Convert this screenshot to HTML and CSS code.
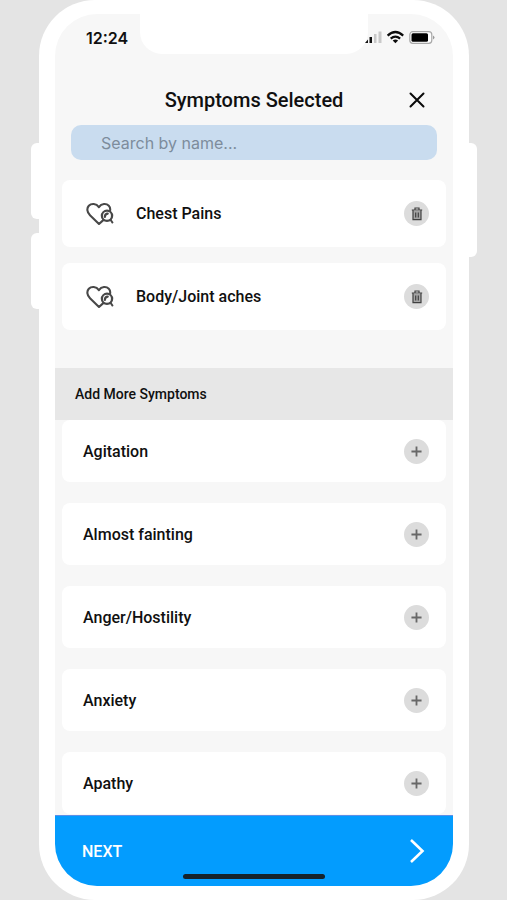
FILE: index.html
```html
<!DOCTYPE html>
<html lang="en">
<head>
<meta charset="utf-8">
<meta name="viewport" content="width=device-width, initial-scale=1">
<title>Symptoms Selected</title>
<link rel="stylesheet" href="styles.css">
</head>
<body>
<svg class="sprite" aria-hidden="true">
  <symbol id="heart" viewBox="0 0 28 24">
    <g fill="none" stroke="#484848" stroke-width="2.100" stroke-linecap="round" stroke-linejoin="round">
      <path d="M13 22 4 13.200C1 10.300 .500 6.300 2.800 3.800C5.300 1.200 10.200 1.200 12.900 5.200C15.600 1.200 20.300 1.200 22.800 3.800C24.100 5.200 24.500 7 24 9M13 22 17 18.400"/>
      <circle cx="21" cy="13.800" r="5.100" stroke-width="2.300"/>
      <path d="M24.700 18 26.400 20.500M18.900 15C18.800 12.800 19.900 11.700 21.800 11.600" />
    </g>
  </symbol>
  <symbol id="trash" viewBox="0 0 12 14">
    <path d="M2 4H10V12.500H2Z" fill="#a5a5a5"/>
    <path d="M.800 3H11.200M4 2.500V1H8V2.500M2 3.500V12.600H10V3.500M4.700 5.500V10.500M7.300 5.500V10.500" fill="none" stroke="#404040" stroke-width="1.200"/>
  </symbol>
  <symbol id="plus" viewBox="0 0 12 12">
    <path d="M6 .500V11.500M.500 6H11.500" fill="none" stroke="#686868" stroke-width="2"/>
  </symbol>
</svg>
<div class="stage">
  <div class="phone">
    <span class="key key-up"></span>
    <span class="key key-down"></span>
    <span class="key key-power"></span>
    <div class="screen">
      <div class="notch"></div>
      <div class="status">
        <span class="time">12:24</span>
        <svg class="signals" viewBox="0 0 72 16" aria-hidden="true">
          <path d="M2 13 5 9.500V13Z" fill="#111"/>
          <path d="M6.500 7H9V13H6.500Z" fill="#111"/>
          <path d="M11 4H13.500V13H11ZM15.500 1.500H18.500V13H15.500Z" fill="#c9c9c9"/>
          <g fill="none" stroke="#0c0c0c" stroke-width="2.200">
            <path d="M24.600 5.600Q32.400-1.600 40.200 5.600"/>
            <path d="M27.700 8.600Q32.400 4.600 37.100 8.600"/>
          </g>
          <path d="M29.700 10.500Q32.400 8.600 35.100 10.500L32.400 13.300Z" fill="#0c0c0c"/>
          <rect x="46.800" y="1.700" width="22" height="11.600" rx="3" fill="#fff" stroke="#a8a8a8" stroke-width="1.200"/>
          <rect x="48.500" y="3.300" width="16.500" height="8.400" rx="1.500" fill="#000"/>
          <path d="M70 5.500Q73 7.500 70 9.500Z" fill="#999"/>
        </svg>
      </div>
      <header class="header">
        <h1>Symptoms Selected</h1>
        <button class="close" type="button" aria-label="Close">
          <svg viewBox="0 0 16 16" aria-hidden="true"><path d="M1.500 1.500 14.500 14.500M14.500 1.500 1.500 14.500" fill="none" stroke="#0a0a0a" stroke-width="2" stroke-linecap="round"/></svg>
        </button>
      </header>
      <input class="search" type="search" placeholder="Search by name..." aria-label="Search by name">
      <ul class="selected">
        <li class="card"><svg class="heart" aria-hidden="true"><use href="#heart"/></svg><span class="name">Chest Pains</span><button class="round" type="button" aria-label="Remove Chest Pains"><svg class="trash"><use href="#trash"/></svg></button></li>
        <li class="card"><svg class="heart" aria-hidden="true"><use href="#heart"/></svg><span class="name">Body/Joint aches</span><button class="round" type="button" aria-label="Remove Body/Joint aches"><svg class="trash"><use href="#trash"/></svg></button></li>
      </ul>
      <h2 class="section">Add More Symptoms</h2>
      <ul class="more">
        <li class="card"><span class="name">Agitation</span><button class="round" type="button" aria-label="Add Agitation"><svg class="plus"><use href="#plus"/></svg></button></li>
        <li class="card"><span class="name">Almost fainting</span><button class="round" type="button" aria-label="Add Almost fainting"><svg class="plus"><use href="#plus"/></svg></button></li>
        <li class="card"><span class="name">Anger/Hostility</span><button class="round" type="button" aria-label="Add Anger/Hostility"><svg class="plus"><use href="#plus"/></svg></button></li>
        <li class="card"><span class="name">Anxiety</span><button class="round" type="button" aria-label="Add Anxiety"><svg class="plus"><use href="#plus"/></svg></button></li>
        <li class="card"><span class="name">Apathy</span><button class="round" type="button" aria-label="Add Apathy"><svg class="plus"><use href="#plus"/></svg></button></li>
      </ul>
      <button class="next" type="button">
        <span>NEXT</span>
        <svg viewBox="0 0 16 26" aria-hidden="true"><path d="M2 2 13.500 13 2 24" fill="none" stroke="#fff" stroke-width="2.600"/></svg>
      </button>
      <span class="home"></span>
    </div>
  </div>
</div>
</body>
</html>
```
FILE: styles.css
```css
* { box-sizing: border-box; }

body {
  margin: 0;
  background: #e4e4e4;
  color: #101010;
  font-family: Roboto, "Liberation Sans", sans-serif;
}

h1, h2, ul { margin: 0; padding: 0; }
ul { list-style: none; }

button {
  border: 0;
  padding: 0;
  font: inherit;
  color: inherit;
  background: none;
  cursor: pointer;
}

.sprite { display: none; }

.stage { padding: 0 38px 0 39px; }

.phone {
  position: relative;
  display: flex;
  min-height: 100vh;
  padding: 14px 16px;
  border-radius: 56px;
  background: #fff;
}

.key {
  position: absolute;
  width: 8px;
  height: 76px;
  background: #fff;
}
.key-up { left: -8px; top: 143px; border-radius: 6px 0 0 6px; }
.key-down { left: -8px; top: 233px; border-radius: 6px 0 0 6px; }
.key-power { right: -8px; top: 143px; height: 114px; border-radius: 0 6px 6px 0; }

.screen {
  position: relative;
  display: flex;
  flex: 1;
  flex-direction: column;
  min-width: 0;
  border-radius: 42px;
  overflow: hidden;
  background: #f7f7f7;
}

.notch {
  position: absolute;
  top: 0;
  left: 85px;
  right: 85px;
  height: 40px;
  border-radius: 0 0 22px 22px;
  background: #fff;
}

.status {
  position: relative;
  display: flex;
  align-items: center;
  justify-content: space-between;
  height: 48px;
  padding: 0 18px 0 31px;
}
.time {
  font-family: Inter, sans-serif;
  font-size: 16px;
  font-weight: 600;
}
.signals { width: 72px; height: 16px; }

.header {
  display: flex;
  align-items: center;
  height: 63px;
  padding: 12px 28px 0;
}
.header h1 {
  flex: 1;
  padding-left: 16px;
  text-align: center;
  font-size: 20px;
  font-weight: 500;
}
.close { width: 16px; height: 16px; }
.close svg { display: block; }

.search {
  height: 35px;
  margin: 0 16px;
  padding: 0 30px;
  border: 0;
  border-radius: 10px;
  background: #c9dcef;
  color: #333;
  font-family: Inter, sans-serif;
  font-size: 16px;
  appearance: none;
}
.search::placeholder { color: #7d8c9c; opacity: 1; }

.selected {
  display: grid;
  gap: 16px;
  padding: 20px 7px 38px;
}

.card {
  display: flex;
  align-items: center;
  height: 62px;
  padding: 0 17px 0 21px;
  border-radius: 8px;
  background: #fff;
}
.selected .card { height: 67px; padding-left: 24px; }

.name {
  flex: 1;
  font-size: 16px;
  font-weight: 500;
}

.heart { width: 28px; height: 24px; margin-right: 22px; }

.round {
  display: grid;
  place-items: center;
  width: 25px;
  height: 25px;
  border-radius: 50%;
  background: #dcdcdc;
}
.trash { width: 12px; height: 14px; }
.plus { width: 11px; height: 11px; }

.section {
  padding: 0 20px;
  background: #e7e7e7;
  font-size: 14px;
  font-weight: 500;
  line-height: 52px;
}

.more {
  display: grid;
  flex: 1;
  align-content: start;
  gap: 21px;
  padding: 0 7px;
}

.next {
  display: flex;
  align-items: center;
  justify-content: space-between;
  height: 71px;
  padding: 0 28px 0 27px;
  border-top: 1px solid #5c8fe8;
  background: #039cfe;
  color: #fff;
  font-size: 16px;
  font-weight: 500;
}
.next svg { width: 16px; height: 26px; }

.home {
  position: absolute;
  bottom: 7px;
  left: 128px;
  right: 128px;
  height: 5px;
  border-radius: 3px;
  background: #16222b;
}
```
